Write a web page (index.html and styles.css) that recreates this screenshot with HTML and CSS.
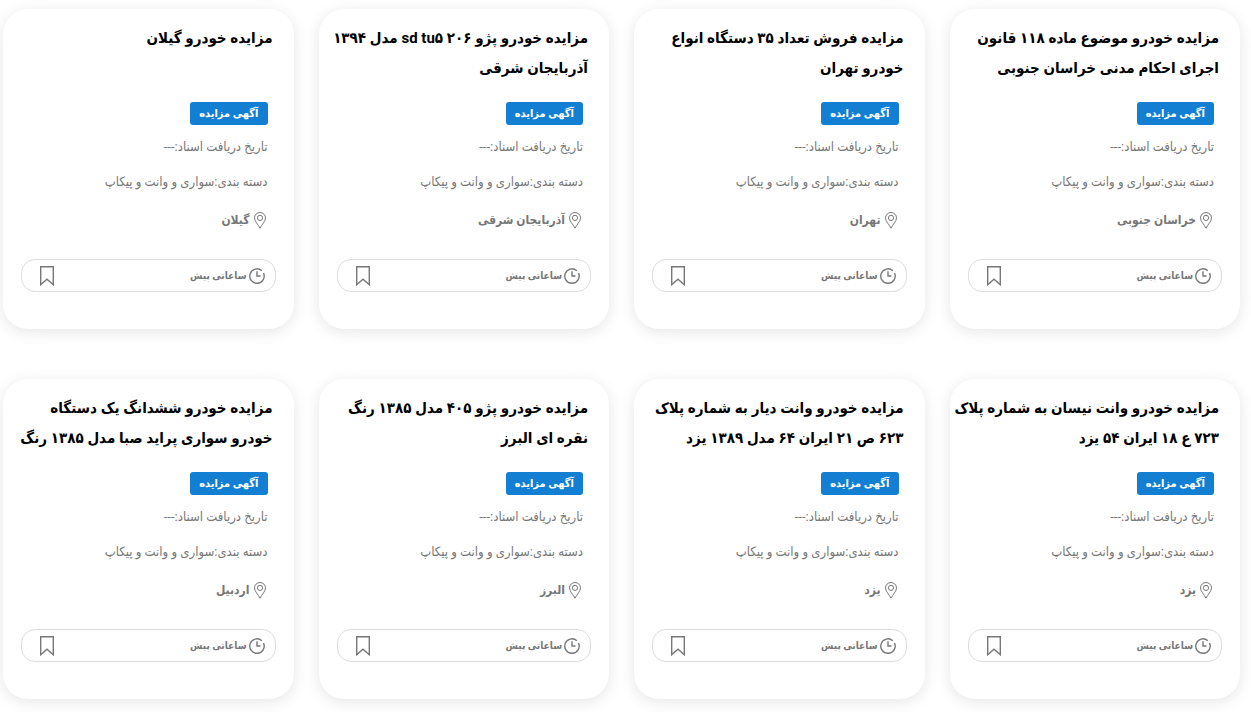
FILE: index.html
```html
<!DOCTYPE html>
<html lang="fa" dir="rtl">
<head>
  <meta charset="UTF-8">
  <title>مزایده خودرو</title>
  <meta name="viewport" content="width=device-width, initial-scale=1.0">
  <link rel="stylesheet" href="styles.css">
</head>
<body>
  <svg class="sprite" aria-hidden="true">
    <symbol id="icon-pin" viewBox="0 0 12 17">
      <path d="M6 .5C2.900.5.5 2.900.5 5.900c0 3.400 3.500 6.300 5.500 10.300 2-4 5.500-6.900 5.500-10.300C11.500 2.900 9.100.5 6 .5z"/>
      <circle cx="6" cy="5.900" r="2.600"/>
    </symbol>
    <symbol id="icon-clock" viewBox="0 0 16 16">
      <path d="M12.800 2.700A7.200 7.200 0 1 0 14.500 5"/>
      <path d="M8 3.200V8h3.500"/>
    </symbol>
    <symbol id="icon-bookmark" viewBox="0 0 14 20">
      <path d="M.7.7h12.600v18L7 13.200.7 18.700z"/>
    </symbol>
  </svg>

  <main class="cards">
    <article class="card">
      <h2 class="card-title">مزایده خودرو موضوع ماده ۱۱۸ قانون اجرای احکام مدنی خراسان جنوبی</h2>
      <div class="card-info">
        <span class="badge">آگهی مزایده</span>
        <p class="meta">تاریخ دریافت اسناد:---</p>
        <p class="meta">دسته بندی:سواری و وانت و پیکاپ</p>
        <p class="place"><svg class="pin"><use href="#icon-pin"/></svg>خراسان جنوبی</p>
      </div>
      <div class="card-footer">
        <span class="time"><svg class="clock"><use href="#icon-clock"/></svg>ساعاتی پیش</span>
        <button class="save" type="button" aria-label="ذخیره"><svg class="bookmark"><use href="#icon-bookmark"/></svg></button>
      </div>
    </article>

    <article class="card">
      <h2 class="card-title">مزایده فروش تعداد ۳۵ دستگاه انواع خودرو تهران</h2>
      <div class="card-info">
        <span class="badge">آگهی مزایده</span>
        <p class="meta">تاریخ دریافت اسناد:---</p>
        <p class="meta">دسته بندی:سواری و وانت و پیکاپ</p>
        <p class="place"><svg class="pin"><use href="#icon-pin"/></svg>تهران</p>
      </div>
      <div class="card-footer">
        <span class="time"><svg class="clock"><use href="#icon-clock"/></svg>ساعاتی پیش</span>
        <button class="save" type="button" aria-label="ذخیره"><svg class="bookmark"><use href="#icon-bookmark"/></svg></button>
      </div>
    </article>

    <article class="card">
      <h2 class="card-title">مزایده خودرو پژو ۲۰۶ sd tu۵ مدل ۱۳۹۴ آذربایجان شرقی</h2>
      <div class="card-info">
        <span class="badge">آگهی مزایده</span>
        <p class="meta">تاریخ دریافت اسناد:---</p>
        <p class="meta">دسته بندی:سواری و وانت و پیکاپ</p>
        <p class="place"><svg class="pin"><use href="#icon-pin"/></svg>آذربایجان شرقی</p>
      </div>
      <div class="card-footer">
        <span class="time"><svg class="clock"><use href="#icon-clock"/></svg>ساعاتی پیش</span>
        <button class="save" type="button" aria-label="ذخیره"><svg class="bookmark"><use href="#icon-bookmark"/></svg></button>
      </div>
    </article>

    <article class="card">
      <h2 class="card-title">مزایده خودرو گیلان</h2>
      <div class="card-info">
        <span class="badge">آگهی مزایده</span>
        <p class="meta">تاریخ دریافت اسناد:---</p>
        <p class="meta">دسته بندی:سواری و وانت و پیکاپ</p>
        <p class="place"><svg class="pin"><use href="#icon-pin"/></svg>گیلان</p>
      </div>
      <div class="card-footer">
        <span class="time"><svg class="clock"><use href="#icon-clock"/></svg>ساعاتی پیش</span>
        <button class="save" type="button" aria-label="ذخیره"><svg class="bookmark"><use href="#icon-bookmark"/></svg></button>
      </div>
    </article>

    <article class="card">
      <h2 class="card-title">مزایده خودرو وانت نیسان به شماره پلاک ۷۲۳ ع ۱۸ ایران ۵۴ یزد</h2>
      <div class="card-info">
        <span class="badge">آگهی مزایده</span>
        <p class="meta">تاریخ دریافت اسناد:---</p>
        <p class="meta">دسته بندی:سواری و وانت و پیکاپ</p>
        <p class="place"><svg class="pin"><use href="#icon-pin"/></svg>یزد</p>
      </div>
      <div class="card-footer">
        <span class="time"><svg class="clock"><use href="#icon-clock"/></svg>ساعاتی پیش</span>
        <button class="save" type="button" aria-label="ذخیره"><svg class="bookmark"><use href="#icon-bookmark"/></svg></button>
      </div>
    </article>

    <article class="card">
      <h2 class="card-title">مزایده خودرو وانت دیار به شماره پلاک ۶۲۳ ص ۲۱ ایران ۶۴ مدل ۱۳۸۹ یزد</h2>
      <div class="card-info">
        <span class="badge">آگهی مزایده</span>
        <p class="meta">تاریخ دریافت اسناد:---</p>
        <p class="meta">دسته بندی:سواری و وانت و پیکاپ</p>
        <p class="place"><svg class="pin"><use href="#icon-pin"/></svg>یزد</p>
      </div>
      <div class="card-footer">
        <span class="time"><svg class="clock"><use href="#icon-clock"/></svg>ساعاتی پیش</span>
        <button class="save" type="button" aria-label="ذخیره"><svg class="bookmark"><use href="#icon-bookmark"/></svg></button>
      </div>
    </article>

    <article class="card">
      <h2 class="card-title">مزایده خودرو پژو ۴۰۵ مدل ۱۳۸۵ رنگ نقره ای البرز</h2>
      <div class="card-info">
        <span class="badge">آگهی مزایده</span>
        <p class="meta">تاریخ دریافت اسناد:---</p>
        <p class="meta">دسته بندی:سواری و وانت و پیکاپ</p>
        <p class="place"><svg class="pin"><use href="#icon-pin"/></svg>البرز</p>
      </div>
      <div class="card-footer">
        <span class="time"><svg class="clock"><use href="#icon-clock"/></svg>ساعاتی پیش</span>
        <button class="save" type="button" aria-label="ذخیره"><svg class="bookmark"><use href="#icon-bookmark"/></svg></button>
      </div>
    </article>

    <article class="card">
      <h2 class="card-title">مزایده خودرو ششدانگ یک دستگاه<br>خودرو سواری پراید صبا مدل ۱۳۸۵ رنگ</h2>
      <div class="card-info">
        <span class="badge">آگهی مزایده</span>
        <p class="meta">تاریخ دریافت اسناد:---</p>
        <p class="meta">دسته بندی:سواری و وانت و پیکاپ</p>
        <p class="place"><svg class="pin"><use href="#icon-pin"/></svg>اردبیل</p>
      </div>
      <div class="card-footer">
        <span class="time"><svg class="clock"><use href="#icon-clock"/></svg>ساعاتی پیش</span>
        <button class="save" type="button" aria-label="ذخیره"><svg class="bookmark"><use href="#icon-bookmark"/></svg></button>
      </div>
    </article>
  </main>
</body>
</html>
```
FILE: styles.css
```css
* {
  box-sizing: border-box;
}
body {
  margin: 0;
  background: #fff;
  font-family: Roboto, "DejaVu Sans Condensed", "DejaVu Sans", sans-serif;
  color: #777;
}
.sprite {
  display: none;
}
.cards {
  display: grid;
  grid-template-columns: repeat(4, 1fr);
  gap: 50px 25px;
  padding: 9px 11px 13px 3px;
}
.card {
  display: flex;
  flex-direction: column;
  min-width: 0;
  padding: 14px 18px 37px;
  background: #fff;
  border-radius: 25px;
  box-shadow: 0 3px 15px rgba(0,0,0,0.1);
}
.card-title {
  min-height: 60px;
  margin: 0 3px 19px -16px;
  font-size: 15px;
  line-height: 30px;
  font-weight: 700;
  color: #000;
}
.card-info {
  padding: 0 8px;
}
.badge {
  display: block;
  width: fit-content;
  padding: 0 9px;
  border-radius: 3px;
  background: #127fd2;
  color: #fff;
  font-size: 11px;
  line-height: 23px;
  font-weight: 700;
}
.meta {
  margin: 12px 0 15px;
  font-size: 13px;
  line-height: 20px;
}
.place {
  display: flex;
  align-items: center;
  gap: 4px;
  margin: 16px 2px 27px;
  font-size: 12px;
  line-height: 24px;
  font-weight: 700;
}
.card-footer {
  display: flex;
  align-items: center;
  justify-content: space-between;
  height: 33px;
  padding: 0 10px 0 18px;
  border: 1px solid #ddd;
  border-radius: 14px;
}
.time {
  display: flex;
  align-items: center;
  gap: 2px;
  font-size: 10px;
  font-weight: 700;
}
.save {
  display: flex;
  padding: 0;
  border: none;
  background: none;
  cursor: pointer;
}
.pin, .clock, .bookmark {
  flex: none;
  fill: none;
  stroke: #777;
}
.pin {
  width: 12px;
  height: 17px;
}
.clock {
  width: 16px;
  height: 16px;
  stroke-width: 1.4;
}
.bookmark {
  width: 14px;
  height: 20px;
  stroke-width: 1.4;
}
```
